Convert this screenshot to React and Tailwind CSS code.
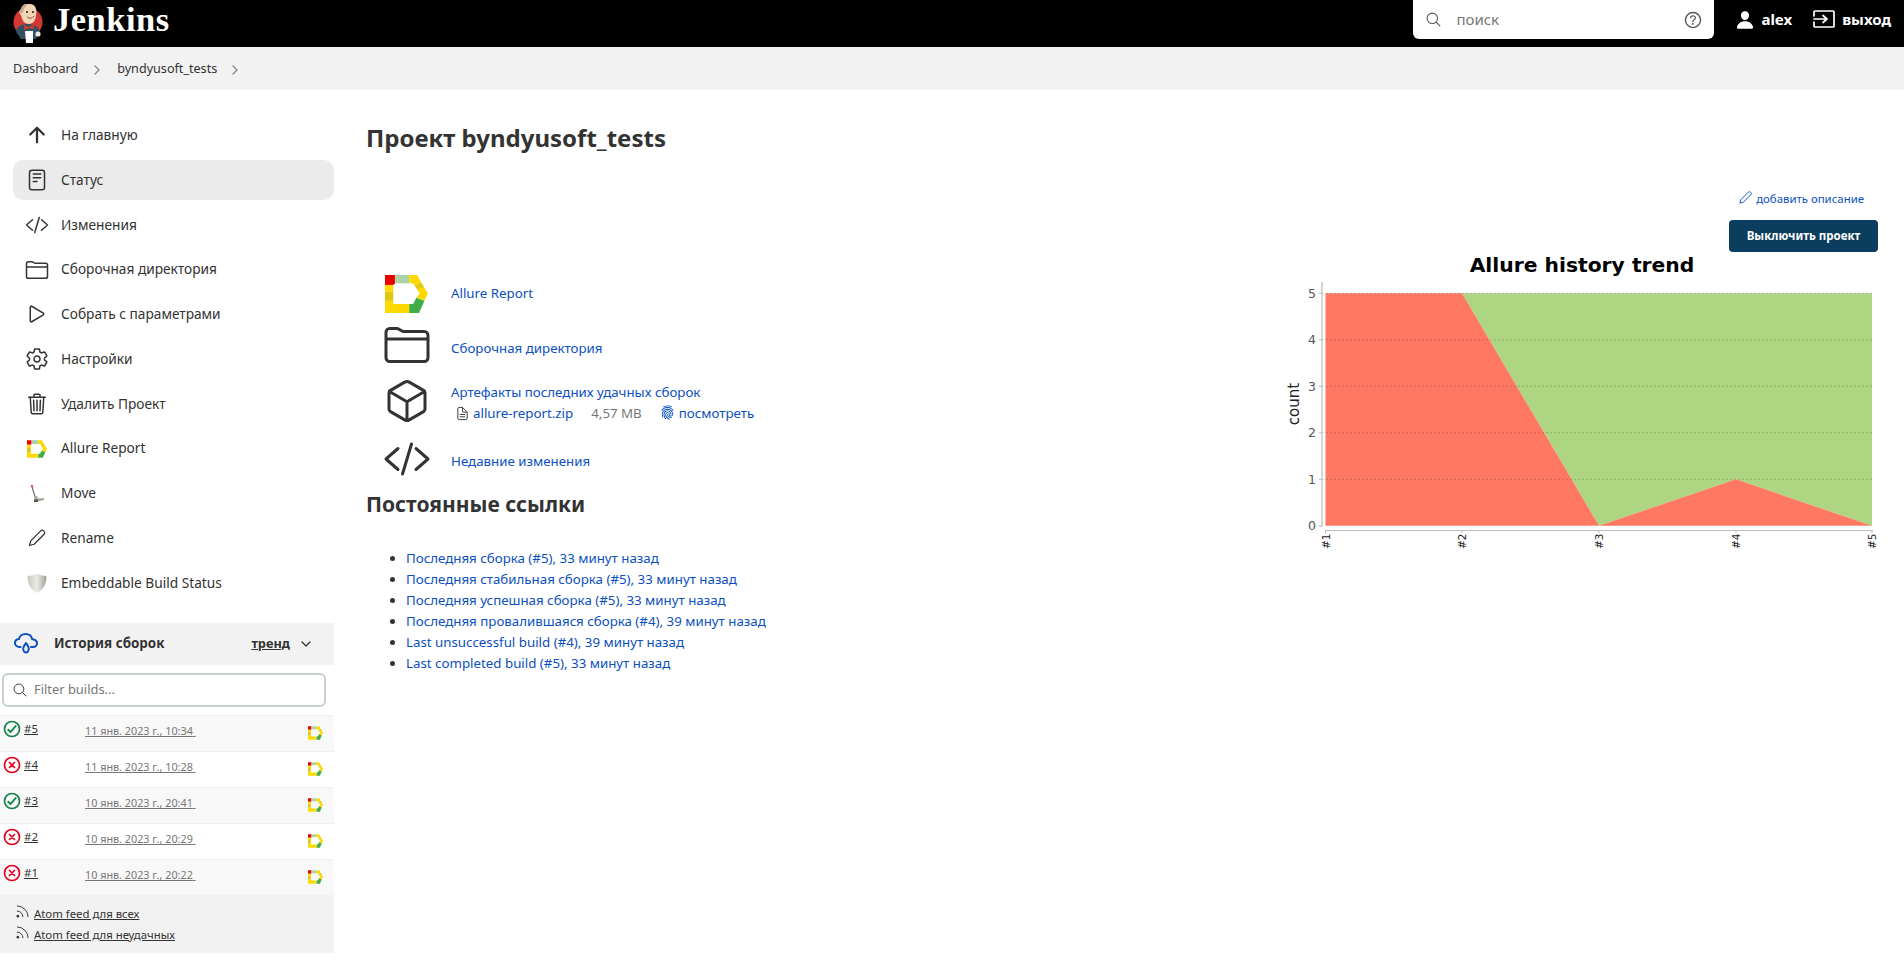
import React from "react";
import {
  IoArrowUpOutline, IoReaderOutline, IoDocumentTextOutline, IoCodeSlashOutline, IoFolderOutline, IoPlayOutline,
  IoSettingsOutline, IoTrashOutline, IoCubeOutline, IoHelpCircleOutline,
  IoSearchOutline, IoPerson, IoCheckmarkCircleOutline, IoCloseCircleOutline, IoFingerPrint,
  IoChevronDownOutline, IoChevronForwardOutline,
} from "react-icons/io5";

const Allure = ({ className }) => (
  <svg viewBox="0 0 130 115" className={className}>
    <polygon fill="#e80000" points="0,0 30,0 30,25 25,30 0,30" />
    <polygon fill="#a9d3a5" points="30,0 73,0 73,25 30,25" />
    <polygon fill="#ffd900" points="73,0 97,0 109,21 89,31 85,25 73,25" />
    <polygon fill="#e4cb14" points="109,21 119,38 97,44 89,31" />
    <polygon fill="#ffd900" points="119,38 130,56 119,79 95,69 105,56 97,44" />
    <polygon fill="#3fae49" points="119,79 103,115 73,115 73,88 85,88 95,69" />
    <polygon fill="#ffd900" points="73,115 0,115 0,78 25,78 25,88 73,88" />
    <polygon fill="#e0c60f" points="0,50 25,50 25,78 0,78" />
    <polygon fill="#ffd900" points="0,30 25,30 25,50 0,50" />
  </svg>
);

const JenkinsLogo = () => (
  <svg viewBox="0 0 30 40" className="w-[30px] h-[40px] shrink-0">
    <circle cx="15" cy="18" r="14.5" fill="#d33833" />
    <path d="M3 28 C4 22 9 20 15 20 C22 20 26 23 27 28 L23 35 L8 35 Z" fill="#335061" />
    <path d="M8 5 C9 1 13 -1 18 0 C23 1 24 6 23 11 C23 16 20 20 16 20 C11 20 9 16 8 11 C6 10 6 7 8 5 Z" fill="#f0d6b7" />
    <path d="M8 5 C9 1 12 -1 15 0 C13 2 11 4 10 8 L8 10 C6 9 6 7 8 5 Z" fill="#c9a98a" />
    <path d="M14 13 Q18 16 21 12" stroke="#a0522d" strokeWidth="1" fill="none" />
    <circle cx="14" cy="8" r="1" fill="#231f20" />
    <circle cx="20" cy="8" r="1" fill="#231f20" />
    <path d="M11 21 L16 23 L21 20 L21 25 L16 24 L11 26 Z" fill="#d33833" />
    <path d="M12 27 L20 27 L20 39 L13 39 Z" fill="#fff" />
    <circle cx="25" cy="30" r="2.6" fill="#e8e8e8" />
  </svg>
);

const MoveIcon = () => (
  <svg viewBox="0 0 20 20" className="w-5 h-5">
    <path d="M5 3 L8.5 14" stroke="#666" strokeWidth="1.1" fill="none" />
    <path d="M3.5 1 L6.5 1.5 L5 4 Z" fill="#c0392b" />
    <path d="M7.5 12 L10 12 L11 14.5 L17 14 L17 16 L9 18 L7 17 Z" fill="#a9a9a0" />
    <rect x="7" y="15.5" width="4" height="2.5" fill="#555" />
  </svg>
);

const ShieldIcon = () => (
  <svg viewBox="0 0 20 20" className="w-5 h-5">
    <defs>
      <linearGradient id="sh" x1="0" x2="1" y1="0" y2="0">
        <stop offset="0" stopColor="#c9c9c2" />
        <stop offset="0.5" stopColor="#ecece6" />
        <stop offset="1" stopColor="#9f9f98" />
      </linearGradient>
    </defs>
    <path d="M10 0.5 C7.5 2 4 3 0.5 3 C0.5 11 3 16 10 20 C17 16 19.5 11 19.5 3 C16 3 12.5 2 10 0.5 Z" fill="url(#sh)" />
  </svg>
);

const PencilIcon = ({ className }) => (
  <svg viewBox="0 0 24 24" className={className} fill="none" stroke="currentColor" strokeWidth="1.5" strokeLinejoin="round">
    <path d="M3 21 L4.5 15.5 L16.5 3.5 a2.5 2.5 0 0 1 3.5 0 l.5 .5 a2.5 2.5 0 0 1 0 3.5 L8.5 19.5 Z" />
  </svg>
);

const RssIcon = () => (
  <svg viewBox="0 0 14 14" className="w-[13px] h-[13px] -mt-[3px] shrink-0" fill="none" stroke="#333" strokeWidth="1">
    <circle cx="2" cy="12" r="1.4" fill="#333" stroke="none" />
    <path d="M1 6.5 a6.5 6.5 0 0 1 6.5 6.5" />
    <path d="M1 1 a12 12 0 0 1 12 12" />
  </svg>
);

const CloudDrop = () => (
  <svg viewBox="0 0 24 21" className="w-6 h-[21px]" fill="none" stroke="#0b4fc0" strokeWidth="2" strokeLinecap="round" strokeLinejoin="round">
    <path d="M6.5 14 H5.5 C3 14 1 12.3 1 10 C1 7.7 3 6.3 5 6 C5.6 3 8.4 1 11.5 1 C15 1 17.6 3.2 18.2 6.2 C20.8 6.4 23 7.8 23 10.3 C23 12.5 21.2 14 19 14 H17" />
    <path d="M12 10 C13.3 12 14.8 13.4 14.8 15.6 C14.8 17.7 13.5 19.5 12 19.5 C10.5 19.5 9.2 17.7 9.2 15.6 C9.2 13.4 10.7 12 12 10 Z" />
  </svg>
);

const ExitIcon = () => (
  <svg viewBox="0 0 22 18" className="w-[22px] h-[18px]" fill="none" stroke="#fff" strokeWidth="1.7" strokeLinecap="round" strokeLinejoin="round">
    <path d="M1 6 V2 a1 1 0 0 1 1 -1 H20 a1 1 0 0 1 1 1 V16 a1 1 0 0 1 -1 1 H2 a1 1 0 0 1 -1 -1 V12" />
    <path d="M1 9 H13 M10 5.5 L14 9 L10 12.5" />
  </svg>
);

const nav = [
  [IoArrowUpOutline, "На главную"],
  [IoReaderOutline, "Статус", true],
  [IoCodeSlashOutline, "Изменения"],
  [IoFolderOutline, "Сборочная директория"],
  [IoPlayOutline, "Собрать с параметрами"],
  [IoSettingsOutline, "Настройки"],
  [IoTrashOutline, "Удалить Проект"],
  ["allure", "Allure Report"],
  [MoveIcon, "Move"],
  [PencilIcon, "Rename"],
  [ShieldIcon, "Embeddable Build Status"],
];

const builds = [
  ["#5", "11 янв. 2023 г., 10:34", true],
  ["#4", "11 янв. 2023 г., 10:28", false],
  ["#3", "10 янв. 2023 г., 20:41", true],
  ["#2", "10 янв. 2023 г., 20:29", false],
  ["#1", "10 янв. 2023 г., 20:22", false],
];

const perm = [
  "Последняя сборка (#5), 33 минут назад",
  "Последняя стабильная сборка (#5), 33 минут назад",
  "Последняя успешная сборка (#5), 33 минут назад",
  "Последняя провалившаяся сборка (#4), 39 минут назад",
  "Last unsuccessful build (#4), 39 минут назад",
  "Last completed build (#5), 33 минут назад",
];

function PlotChart() {
  const xs = [55.5, 192, 329, 466, 602];
  const y = (v) => 41.3 + (5 - v) * 46.5;
  return (
    <svg viewBox="0 0 610 310" className="w-[610px] h-[310px] block">
      <text x="312" y="20" textAnchor="middle" fontFamily="DejaVu Sans" fontWeight="700" fontSize="20.3" fill="#000">Allure history trend</text>
      <polygon fill="#aed581" points={`${xs[1]},${y(5)} ${xs[4]},${y(5)} ${xs[4]},${y(0)} ${xs[3]},${y(1)} ${xs[2]},${y(0)}`} />
      <polygon fill="#ff7863" points={`${xs[0]},${y(5)} ${xs[1]},${y(5)} ${xs[2]},${y(0)} ${xs[3]},${y(1)} ${xs[4]},${y(0)} ${xs[0]},${y(0)}`} />
      {[5, 4, 3, 2, 1].map((v) => (
        <line key={v} x1="52" x2={xs[4]} y1={y(v)} y2={y(v)} stroke="#000" strokeOpacity="0.18" strokeDasharray="2 2" />
      ))}
      <line x1="52" x2="52" y1="30" y2={y(0) + 1} stroke="#bdbdbd" strokeWidth="1.2" />
      <line x1="55" x2="603" y1="278.5" y2="278.5" stroke="#bdbdbd" strokeWidth="1.2" />
      {[0, 1, 2, 3, 4, 5].map((v) => (
        <g key={v}>
          <line x1="49" x2="52" y1={y(v)} y2={y(v)} stroke="#bdbdbd" />
          <text x="46" y={y(v) + 4.5} textAnchor="end" fontFamily="DejaVu Sans" fontSize="12.5" fill="#555">{v}</text>
        </g>
      ))}
      {xs.map((x, i) => (
        <g key={x}>
          <line x1={x} x2={x} y1="278" y2="281" stroke="#bdbdbd" />
          <text transform={`translate(${x + 4} 297) rotate(-90)`} fontFamily="DejaVu Sans" fontSize="10.5" fill="#222">{`#${i + 1}`}</text>
        </g>
      ))}
      <text transform="translate(29 152) rotate(-90)" textAnchor="middle" fontFamily="DejaVu Sans" fontSize="15" fill="#222">count</text>
    </svg>
  );
}

export default function App() {
  return (
    <div className="h-[967px] overflow-hidden bg-white text-[13.7px] text-[#333] font-['Noto_Sans',sans-serif]">
      <header className="h-[47px] bg-black flex items-center text-white">
        <div className="flex items-center pl-[13px] gap-[10px] overflow-hidden h-full">
          <JenkinsLogo />
          <span className="font-['Liberation_Serif',serif] font-bold text-[34.5px] leading-none tracking-[0.5px] -mt-[8px]">Jenkins</span>
        </div>
        <div className="ml-auto flex items-center h-full">
          <div className="w-[301px] h-[39px] -mt-[8px] bg-white rounded-b-[6px] flex items-center pl-[12px] pr-[10px] text-[#777]">
            <IoSearchOutline className="w-[17px] h-[17px] text-[#555]" />
            <span className="ml-[14px] text-[15px]">поиск</span>
            <IoHelpCircleOutline className="ml-auto w-[22px] h-[22px] text-[#555]" />
          </div>
          <IoPerson className="ml-[21px] w-[20px] h-[20px] -mt-[8px]" />
          <span className="ml-[6px] font-bold text-[15px] -mt-[8px]">alex</span>
          <span className="ml-[21px] -mt-[9px]"><ExitIcon /></span>
          <span className="ml-[7px] mr-[13px] font-bold text-[15px] -mt-[8px]">выход</span>
        </div>
      </header>

      <div className="h-[43px] bg-[#f2f2f2] flex items-center pl-[13px] pt-[2px] text-[12.6px] text-[#333]">
        <span>Dashboard</span>
        <IoChevronForwardOutline className="ml-[12px] w-[14px] h-[14px] text-[#888]" />
        <span className="ml-[13px]">byndyusoft_tests</span>
        <IoChevronForwardOutline className="ml-[11px] w-[14px] h-[14px] text-[#888]" />
      </div>

      <div className="flex">
        <aside className="w-[334px] shrink-0">
          <nav className="pt-[25.2px] pl-[13px] flex flex-col gap-[4.8px]">
            {nav.map(([Icon, label, active]) => (
              <div key={label} className={`h-[40px] flex items-center rounded-[10px] pl-[12px] ${active ? "bg-[#ebebeb]" : ""}`}>
                <span className="w-[24px] h-[24px] flex items-center justify-center shrink-0 text-[#333]">
                  {Icon === "allure" ? <Allure className="w-5 h-[18px]" /> : <Icon className={Icon === PencilIcon ? "w-5 h-5" : "w-6 h-6"} />}
                </span>
                <span className="ml-[12px]">{label}</span>
              </div>
            ))}
          </nav>

          <div className="mt-[19.8px] h-[42px] bg-[#f2f2f2] flex items-center pl-[14px]">
            <CloudDrop />
            <span className="ml-[16px] font-bold text-[13.4px] text-[#333] -mt-[1px]">История сборок</span>
            <span className="ml-auto font-bold text-[12.8px] underline -mt-[1px]">тренд</span>
            <IoChevronDownOutline className="ml-[9px] mr-[21px] w-[14px] h-[14px]" />
          </div>

          <div className="mt-[8px] ml-[2px] w-[324px] h-[34px] border-2 border-[#c5d0d3] rounded-[6px] flex items-center pl-[8px] text-[#777]">
            <IoSearchOutline className="w-[16px] h-[16px] text-[#444]" />
            <span className="ml-[6px] text-[12.9px]">Filter builds...</span>
          </div>

          <div className="mt-[8px]">
            {builds.map(([n, date, ok], i) => (
              <div key={n} className={`h-[36px] border-t border-[#f0f0f0] flex items-start relative ${i % 2 === 0 ? "bg-[#f8f8f8]" : "bg-white"}`}>
                {ok ? (
                  <IoCheckmarkCircleOutline className="ml-[2px] mt-[3px] w-[20px] h-[20px] text-[#138347] [&_*]:stroke-[44]" />
                ) : (
                  <IoCloseCircleOutline className="ml-[2px] mt-[3px] w-[20px] h-[20px] text-[#e6001f] [&_*]:stroke-[44]" />
                )}
                <span className="ml-[2px] mt-[4px] text-[11.5px] underline">{n}</span>
                <span className="absolute left-[85px] top-[7px] text-[10.8px] leading-[16px] text-[#777] underline whitespace-pre">{date} </span>
                <Allure className="absolute left-[308px] top-[10px] w-[15px] h-[14px]" />
              </div>
            ))}
          </div>

          <div className="h-[58px] bg-[#f2f2f2] pl-[16px] pt-[10px] flex flex-col gap-[4px] text-[11.35px]">
            {["Atom feed для всех", "Atom feed для неудачных"].map((t) => (
              <div key={t} className="flex items-center h-[17px]">
                <RssIcon />
                <span className="ml-[5px] underline">{t}</span>
              </div>
            ))}
          </div>
        </aside>

        <main className="flex-1 min-w-0 flex pl-[32px]">
          <div className="flex-1 min-w-0">
            <h1 className="mt-[31px] text-[24px] leading-[34px] font-bold text-[#333]">Проект byndyusoft_tests</h1>

            <div className="mt-[112px] flex flex-col text-[13.3px] text-[#0b4fc0]">
              <div className="flex items-center h-[53px] pl-[19px]">
                <Allure className="w-[43px] h-[38px]" />
                <span className="ml-[23px]">Allure Report</span>
              </div>
              <div className="flex items-center h-[50px] pl-[19px]">
                <IoFolderOutline className="w-[48px] h-[48px] text-[#333] -ml-[2px]" />
                <span className="ml-[20px] mt-[8px]">Сборочная директория</span>
              </div>
              <div className="flex items-center h-[52px] pl-[19px] mt-[5px]">
                <IoCubeOutline className="w-[48px] h-[48px] text-[#333] -ml-[2px]" />
                <div className="ml-[20px] mt-[6px] flex flex-col">
                  <span>Артефакты последних удачных сборок</span>
                  <div className="flex items-center h-[23px]">
                    <IoDocumentTextOutline className="ml-[4px] w-[15px] h-[15px] text-[#333]" />
                    <span className="ml-[3px]">allure-report.zip</span>
                    <span className="ml-[18px] text-[#777]">4,57 MB</span>
                    <IoFingerPrint className="ml-[18px] w-[15px] h-[15px] -mt-[3px]" />
                    <span className="ml-[4px]">посмотреть</span>
                  </div>
                </div>
              </div>
              <div className="flex items-center h-[52px] pl-[19px] mt-[6px]">
                <IoCodeSlashOutline className="w-[48px] h-[48px] text-[#333] -ml-[2px]" />
                <span className="ml-[20px] mt-[6px]">Недавние изменения</span>
              </div>
            </div>

            <h2 className="mt-[5px] text-[21px] leading-[28px] font-bold text-[#333]">Постоянные ссылки</h2>
            <ul className="mt-[30px] pl-[40px] list-disc text-[13.3px] text-[#0b4fc0] marker:text-[#333]">
              {perm.map((p) => (
                <li key={p} className="h-[21px] leading-[21px]">{p}</li>
              ))}
            </ul>
          </div>

          <div className="w-[634px] shrink-0 flex flex-col items-end pr-[26px]">
            <div className="mt-[100px] flex items-center text-[11.4px] text-[#0b4fc0] pr-[14px]">
              <PencilIcon className="w-[15px] h-[15px] -mt-[2px]" />
              <span className="ml-[3px]">добавить описание</span>
            </div>
            <button className="mt-[13px] w-[149px] h-[32px] bg-[#0b3d5e] rounded-[4px] text-white font-bold text-[11.5px] flex items-center justify-center">Выключить проект</button>
            <div className="w-[610px] -mr-[2px]">
              <PlotChart />
            </div>
          </div>
        </main>
      </div>
    </div>
  );
}
